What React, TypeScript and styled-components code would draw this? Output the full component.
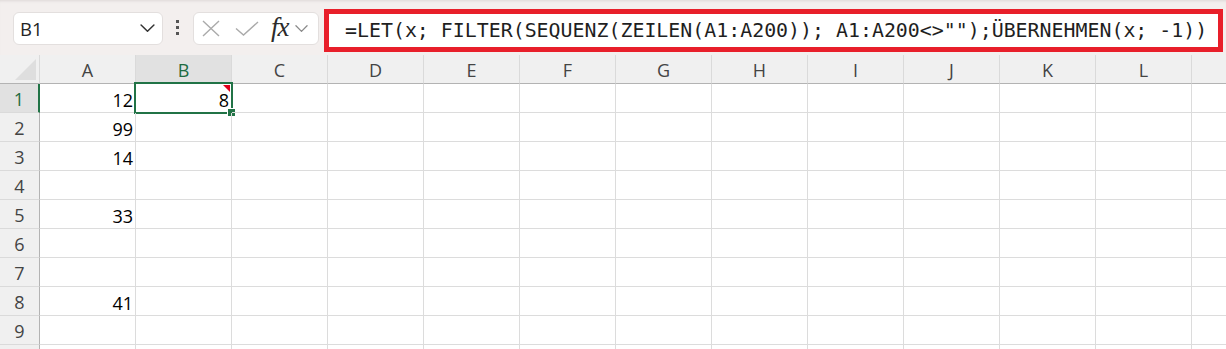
import React from "react";
import styled, { createGlobalStyle } from "styled-components";

const GlobalStyle = createGlobalStyle`
  html, body {
    margin: 0;
    padding: 0;
    background: #ffffff;
  }
  body {
    font-family: "Open Sans", "Liberation Sans", sans-serif;
  }
`;

// last column and row are only partly visible, so they stay unlabelled
const COLS = ["A", "B", "C", "D", "E", "F", "G", "H", "I", "J", "K", "L", ""];
const ROWS = [1, 2, 3, 4, 5, 6, 7, 8, 9, 10];
const DATA: Record<string, string> = {
  A1: "12",
  B1: "8",
  A2: "99",
  A3: "14",
  A5: "33",
  A8: "41",
};
const FORMULA = '=LET(x; FILTER(SEQUENZ(ZEILEN(A1:A200)); A1:A200<>"");ÜBERNEHMEN(x; -1))';
const GREEN = "#217346";

const Screen = styled.div`
  width: 1226px;
  height: 349px;
  overflow: hidden;
`;

const Toolbar = styled.div`
  height: 55px;
  display: flex;
  align-items: flex-start;
  padding-left: 13px;
  background: #f3efee;
  box-shadow: inset 0 3px 3px -2px #ddd8d7;
  box-sizing: border-box;
`;

const NameBox = styled.div`
  margin-top: 12px;
  width: 150px;
  height: 33px;
  box-sizing: border-box;
  display: flex;
  align-items: center;
  justify-content: space-between;
  padding: 0 7px 0 6px;
  background: #ffffff;
  border: 1px solid #e3dfde;
  border-radius: 6px;
  font-size: 18.5px;
  color: #242424;
`;

const Dots = styled.div`
  margin: 20px 14px 0 13px;
  display: flex;
  flex-direction: column;
  gap: 3px;

  span {
    width: 3px;
    height: 3px;
    background: #555;
  }
`;

const FxBox = styled.div`
  margin-top: 12px;
  width: 126px;
  height: 33px;
  box-sizing: border-box;
  display: flex;
  align-items: center;
  padding-left: 8px;
  background: #ffffff;
  border: 1px solid #e3dfde;
  border-radius: 6px;
`;

const Fx = styled.span`
  margin: 0 6px 0 12px;
  font-family: "Liberation Serif", serif;
  font-style: italic;
  font-size: 27px;
  line-height: 1;
  color: #2b2b2b;
  letter-spacing: -1px;
  padding-bottom: 3px;
`;

const FormulaBox = styled.div`
  margin: 9px 3px 0 5px;
  flex: 1;
  height: 43px;
  box-sizing: border-box;
  border: 5px solid #e81f2a;
  background: #ffffff;
  display: flex;
  align-items: center;
  padding-left: 16px;
  font-family: "DejaVu Sans Mono", "Liberation Mono", monospace;
  font-size: 19.9px;
  color: #1f1f1f;
  white-space: nowrap;
  overflow: hidden;
`;

const Row = styled.div`
  display: grid;
  grid-template-columns: 40px repeat(13, 96px);
  height: 29px;
`;

const Corner = styled.div`
  position: relative;
  background: #f0f0f0;
  border-right: 1px solid #dadada;
  border-bottom: 1px solid #b3b3b3;

  &::after {
    content: "";
    position: absolute;
    right: 3px;
    bottom: 3px;
    width: 0;
    height: 0;
    border-left: 21px solid transparent;
    border-bottom: 21px solid #dedede;
  }
`;

const ColHead = styled.div<{ $active?: boolean }>`
  display: flex;
  align-items: center;
  justify-content: center;
  padding-top: 2px;
  box-sizing: border-box;
  background: ${(p) => (p.$active ? "#e1e1e1" : "#f0f0f0")};
  color: ${(p) => (p.$active ? "#1e6b41" : "#444444")};
  border-right: 1px solid #dadada;
  border-bottom: ${(p) => (p.$active ? `2px solid ${GREEN}` : "1px solid #b3b3b3")};
  font-size: 18px;
`;

const RowHead = styled.div<{ $active?: boolean }>`
  display: flex;
  align-items: center;
  justify-content: center;
  padding-top: 2px;
  box-sizing: border-box;
  background: ${(p) => (p.$active ? "#e1e1e1" : "#f0f0f0")};
  color: ${(p) => (p.$active ? "#1e6b41" : "#444444")};
  border-right: ${(p) => (p.$active ? `2px solid ${GREEN}` : "1px solid #b3b3b3")};
  border-bottom: 1px solid #dadada;
  font-size: 18px;
`;

const Cell = styled.div`
  position: relative;
  display: flex;
  align-items: flex-end;
  justify-content: flex-end;
  padding: 0 2px 3px 0;
  box-sizing: border-box;
  border-right: 1px solid #dcdcdc;
  border-bottom: 1px solid #dcdcdc;
  font-size: 18px;
  line-height: 1;
  color: #000000;
`;

const Selection = styled.div`
  position: absolute;
  left: -2px;
  top: -2px;
  right: -2px;
  bottom: -2px;
  border: 2px solid ${GREEN};
  pointer-events: none;

  &::after {
    content: "";
    position: absolute;
    right: -5px;
    bottom: -5px;
    width: 7px;
    height: 7px;
    background: ${GREEN};
    border: 1px solid #ffffff;
  }
`;

const CommentMark = styled.div`
  position: absolute;
  top: 1px;
  right: 1px;
  width: 0;
  height: 0;
  border-left: 7px solid transparent;
  border-top: 7px solid #e0001b;
`;

const Chevron = ({ size, color }: { size: number; color: string }) => (
  <svg width={size} height={size * 0.55} viewBox="0 0 16 9" fill="none">
    <path d="M1 1l7 7 7-7" stroke={color} strokeWidth="1.6" strokeLinecap="round" strokeLinejoin="round" />
  </svg>
);

export default function App() {
  return (
    <Screen>
      <GlobalStyle />
      <Toolbar>
        <NameBox>
          <span>B1</span>
          <Chevron size={15} color="#333" />
        </NameBox>
        <Dots>
          <span />
          <span />
          <span />
        </Dots>
        <FxBox>
          <svg width="18" height="17" viewBox="0 0 18 17" fill="none">
            <path d="M1 1l16 15M17 1L1 16" stroke="#aaaaaa" strokeWidth="1.4" />
          </svg>
          <svg width="24" height="15" viewBox="0 0 24 15" fill="none" style={{ marginLeft: 15 }}>
            <path d="M1 7.5l7.5 6.5L23 1" stroke="#aaaaaa" strokeWidth="1.4" />
          </svg>
          <Fx>fx</Fx>
          <Chevron size={13} color="#8a8a8a" />
        </FxBox>
        <FormulaBox>{FORMULA}</FormulaBox>
      </Toolbar>

      <Row>
        <Corner />
        {COLS.map((c, i) => (
          <ColHead key={i} $active={c === "B"}>
            {c}
          </ColHead>
        ))}
      </Row>

      {ROWS.map((r) => (
        <Row key={r}>
          <RowHead $active={r === 1}>{r < 10 ? r : ""}</RowHead>
          {COLS.map((c, i) => {
            const id = `${c}${r}`;
            return (
              <Cell key={i}>
                {DATA[id]}
                {id === "B1" && (
                  <>
                    <CommentMark />
                    <Selection />
                  </>
                )}
              </Cell>
            );
          })}
        </Row>
      ))}
    </Screen>
  );
}
